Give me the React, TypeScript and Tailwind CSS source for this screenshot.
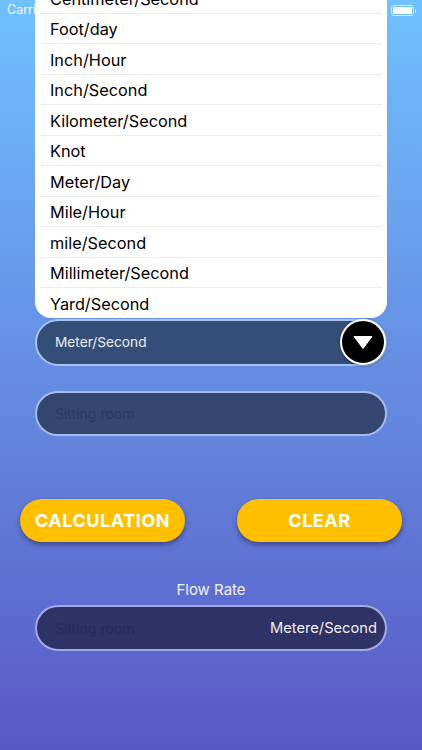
import * as React from "react";

const units = [
  "Centimeter/Second",
  "Foot/day",
  "Inch/Hour",
  "Inch/Second",
  "Kilometer/Second",
  "Knot",
  "Meter/Day",
  "Mile/Hour",
  "mile/Second",
  "Millimeter/Second",
  "Yard/Second",
];

const Field: React.FC<{ className?: string; children?: React.ReactNode }> = ({ className, children }) => (
  <div className={`mx-[35px] flex items-center rounded-full border-2 pl-[18px] ${className ?? ""}`}>
    {children}
  </div>
);

export default function App() {
  return (
    <div className="relative h-[750px] w-[422px] overflow-hidden bg-gradient-to-b from-[#6fc1ff] to-[#5858c4] font-['Inter','Noto_Sans',sans-serif]">
      {/* status bar sits behind the open list */}
      <div className="absolute top-0 left-0 flex h-[21px] w-full items-center justify-between pr-[6px] pl-[7px] text-[12.5px] text-white/90">
        <span>Carrier</span>
        <div className="flex items-center">
          <div className="h-[11px] w-[23px] rounded-[3px] border border-white/70 p-[1px]">
            <div className="h-full w-full rounded-[1.5px] bg-white" />
          </div>
          <div className="ml-[1px] h-[4px] w-[1.5px] rounded-r-[1px] bg-white/70" />
        </div>
      </div>

      <div className="relative mx-[35px] mt-[-17px] h-[335px] overflow-hidden rounded-b-[16px] bg-white">
        {units.map((u) => (
          <div key={u} className="mx-[5px] flex h-[30.5px] items-center border-b border-[#ececec] pt-[2px] pl-[10px] text-[16.3px] text-black last:border-b-0">
            {u}
          </div>
        ))}
      </div>

      <Field className="relative mt-[1px] h-[46.5px] border-[#a6c4ef] bg-[#344e78]">
        <span className="text-[13.7px] text-white/90">Meter/Second</span>
        <div className="absolute top-[-2px] right-[-1px] flex h-[46px] w-[46px] items-center justify-center rounded-full border-2 border-white bg-black shadow-[0_1px_3px_rgba(0,0,0,0.4)]">
          <svg width="20" height="13" viewBox="0 0 20 13">
            <path d="M1 0.5H19L10 12.5Z" fill="#fff" stroke="#fff" strokeLinejoin="round" />
          </svg>
        </div>
      </Field>

      <Field className="mt-[25px] h-[45.5px] border-[#a6bdec] bg-[#33466f]">
        <span className="text-[14px] text-[#2a3a66]">Sitting room</span>
      </Field>

      <div className="mx-[20px] mt-[63px] flex justify-between">
        <button className="h-[43px] w-[165px] rounded-full bg-[#fec000] text-[18px] font-bold tracking-[0.55px] text-white shadow-[0_3px_5px_rgba(40,40,90,0.55)]">
          CALCULATION
        </button>
        <button className="h-[43px] w-[165px] rounded-full bg-[#fec000] text-[18px] font-bold tracking-[0.55px] text-white shadow-[0_3px_5px_rgba(40,40,90,0.55)]">
          CLEAR
        </button>
      </div>

      <div className="mt-[38px] text-center text-[15px] leading-[20px] text-white/90">Flow Rate</div>

      <Field className="mt-[5px] h-[46px] justify-between border-[#a3a9e4] bg-[#2e3264] pr-[8px]">
        <span className="text-[14px] text-[#272c5c]">Sitting room</span>
        <span className="text-[14.7px] text-white/95">Metere/Second</span>
      </Field>
    </div>
  );
}
